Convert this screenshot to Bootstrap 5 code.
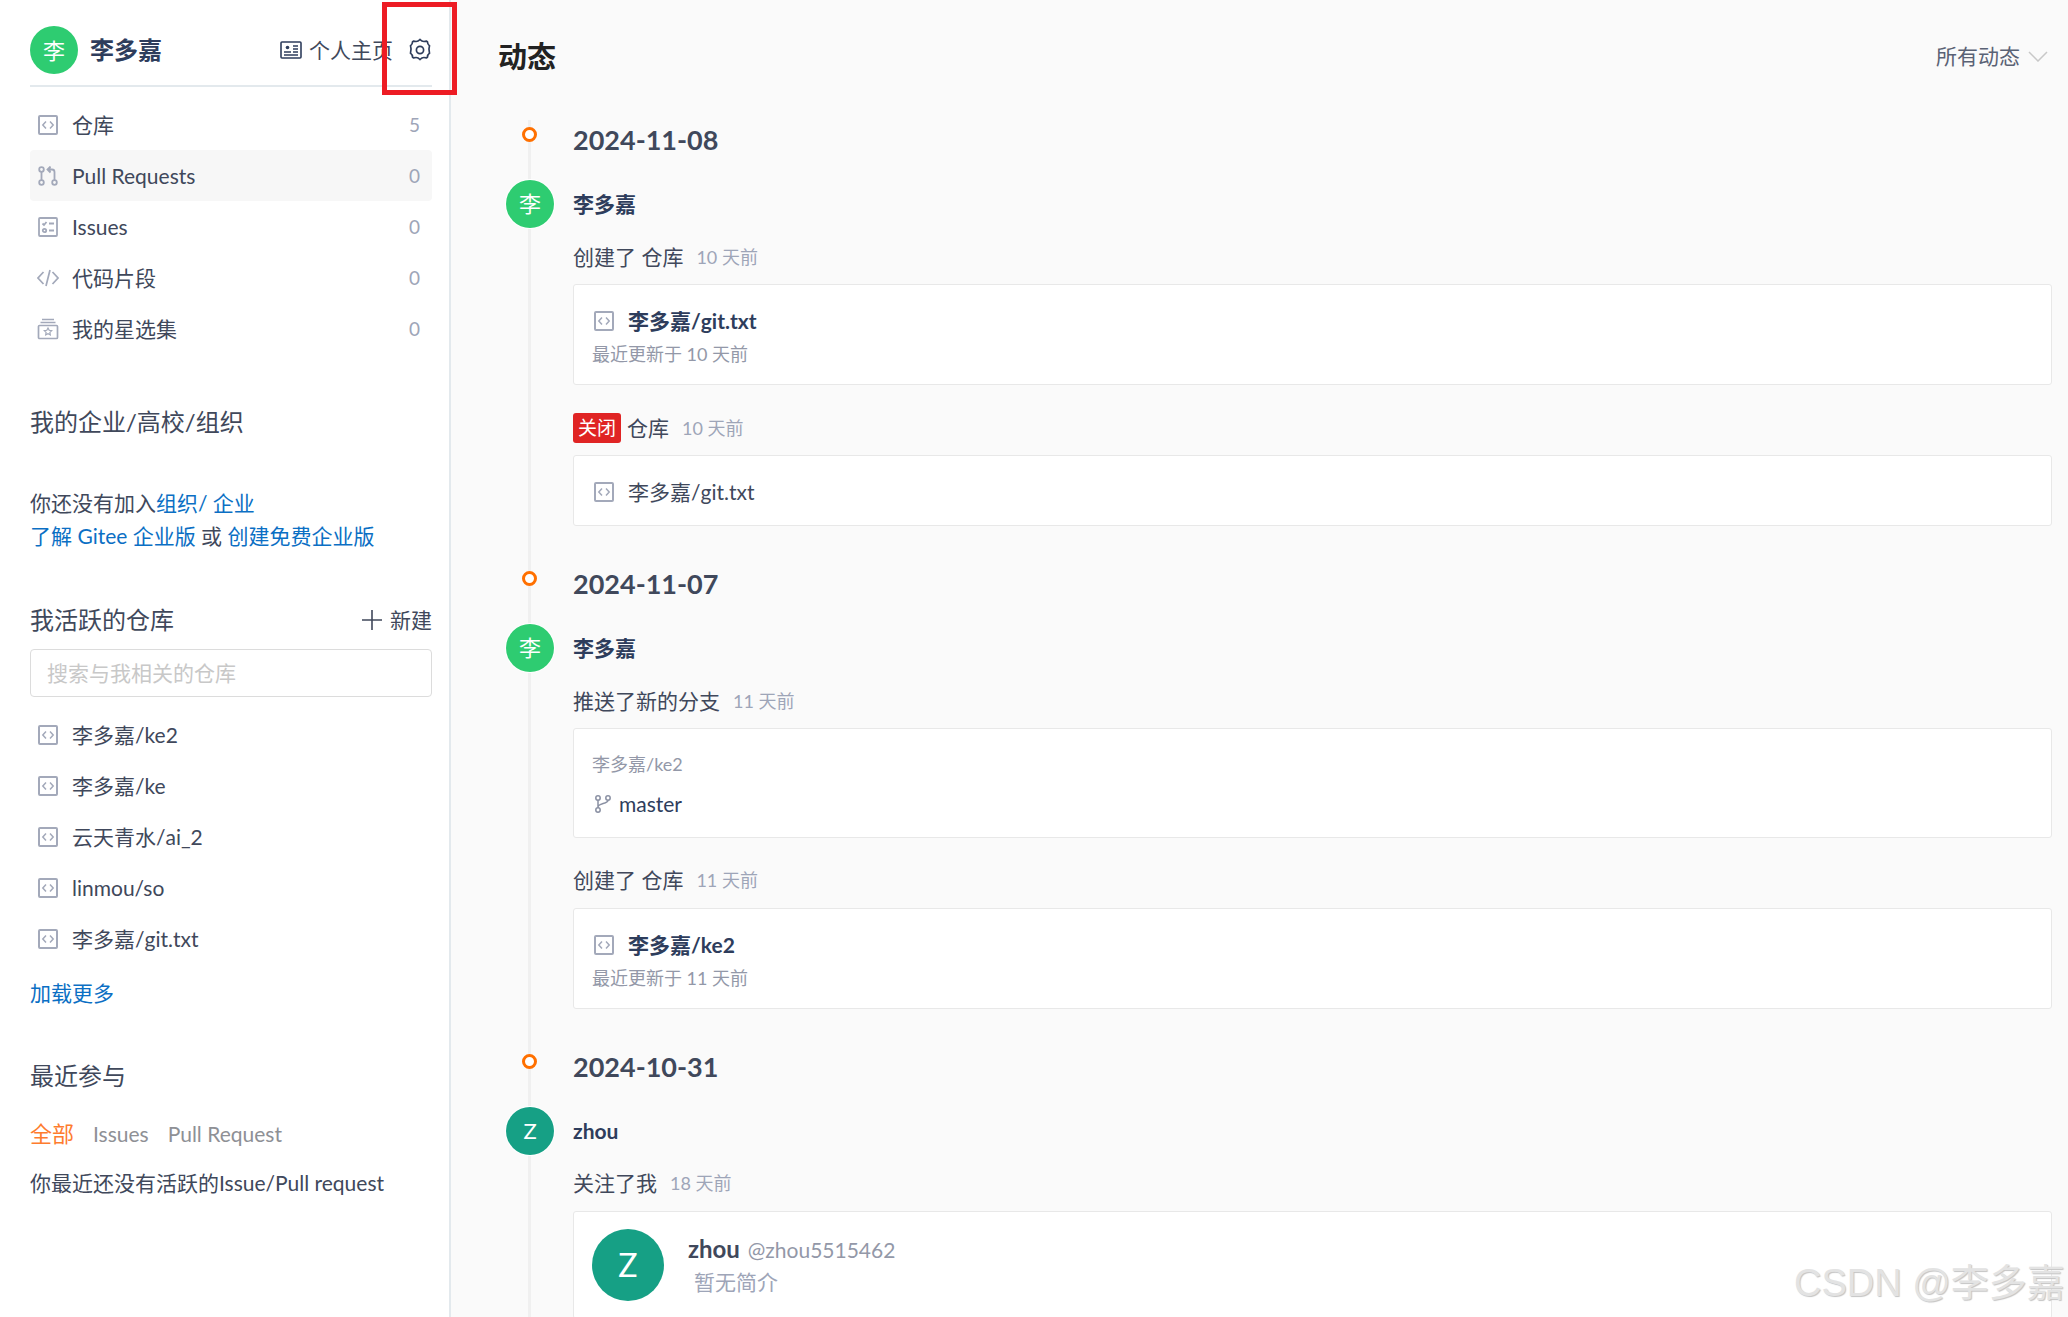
<!DOCTYPE html>
<html lang="zh-CN">
<head>
    <meta charset="UTF-8">
    <meta name="viewport" content="width=device-width, initial-scale=1.0">
    <title>动态</title>
    <link rel="stylesheet" href="https://cdn.jsdelivr.net/npm/bootstrap@5.3.2/dist/css/bootstrap.min.css">
    <style>
        html, body {
            height: 1317px;
            overflow: hidden;
        }
        body {
            font-family: Lato, "Noto Sans CJK SC", sans-serif;
            font-size: 21px;
            color: #40485b;
            background-color: #fafafa;
        }
        a { text-decoration: none; }
        svg { flex: none; display: block; }
        .page-wrap { height: 1317px; }
        .side-bar {
            width: 451px;
            flex: none;
            background-color: #fff;
            border-right: 2px solid #e3e9ed;
            padding: 26px 17px 0 30px;
        }
        .user-head {
            height: 61px;
            align-items: flex-start;
            border-bottom: 2px solid #e3e9ed;
        }
        .round-avatar {
            width: 48px;
            height: 48px;
            border-radius: 50%;
            color: #fff;
            font-size: 22px;
            flex: none;
        }
        .bg-li { background-color: #2ecc71; }
        .bg-zhou { background-color: #16a085; }
        .user-name {
            font-size: 24px;
            font-weight: 700;
            color: #2e3d5c;
            margin-left: 12px;
            line-height: 48px;
        }
        .home-link {
            font-size: 21px;
            color: #40485b;
            line-height: 24px;
            margin-left: auto;
            margin-top: 12px;
            gap: 7px;
            margin-right: 16px;
        }
        .gear-icon { margin-top: 12px; margin-right: 1px; }
        .side-list { margin-top: 12px; }
        .side-row {
            height: 51px;
            padding: 0 12px 0 8px;
            border-radius: 4px;
            gap: 14px;
            color: #40485b;
            line-height: 51px;
        }
        .side-row.is-on { background-color: #f7f7f7; }
        .wide-icon { margin: 0 -1px; }
        .side-count { margin-left: auto; color: #9ea5b8; font-size: 19px; }
        .side-title {
            font-size: 24px;
            line-height: 32px;
            color: #40485b;
        }
        .org-title { margin-top: 52px; }
        .org-text { margin-top: 48px; line-height: 33px; }
        .blue-link { color: #0b6fc4; }
        .active-head { margin-top: 52px; }
        .new-link { font-size: 21px; color: #40485b; gap: 8px; line-height: 32px; }
        .repo-search {
            margin-top: 13px;
            height: 48px;
            font-size: 21px;
            padding: 0 16px 2px;
            border: 1.5px solid #dcdcdc;
            border-radius: 4px;
        }
        .repo-search::placeholder { color: #c8c8c8; }
        .repo-list { margin-top: 12px; }
        .more-link { margin-top: 14px; line-height: 30px; display: block; }
        .recent-title { margin-top: 52px; }
        .recent-tabs { margin-top: 27px; line-height: 30px; gap: 19px; color: #8e9095; font-size: 21px; }
        .recent-tabs .tab-on { color: #fe7c2e; font-size: 22px; }
        .recent-empty { margin-top: 19px; line-height: 30px; }

        .main-area {
            flex: 1;
            min-width: 0;
            padding: 0 16px 0 47px;
            position: relative;
        }
        .main-top { height: 114px; padding-top: 37px; }
        .main-title { font-size: 29px; font-weight: 700; color: #222; line-height: 40px; margin: 0; }
        .filter-drop { margin-left: auto; margin-right: 4px; gap: 8px; color: #5a6275; line-height: 40px; height: 38px; }
        .feed-wrap { padding-left: 75px; position: relative; }
        .feed-line {
            position: absolute;
            left: 30px;
            top: 0;
            bottom: -400px;
            width: 3px;
            background-color: #f0f0f0;
        }
        .feed-date {
            position: relative;
            font-size: 27px;
            font-weight: 700;
            line-height: 40px;
            margin-top: 38px;
            color: #40485b;
        }
        .feed-date.is-first { margin-top: 6px; }
        .feed-date::before {
            content: "";
            position: absolute;
            left: -51px;
            top: 7px;
            width: 15px;
            height: 15px;
            border: 3px solid #ff7000;
            border-radius: 50%;
            background-color: #fff;
        }
        .feed-user {
            position: relative;
            height: 48px;
            margin-top: 20px;
            line-height: 48px;
            font-weight: 700;
            color: #2e3d5c;
        }
        .feed-user .round-avatar {
            position: absolute;
            left: -67px;
            top: 0;
            box-shadow: 0 0 0 1px #fff;
            font-weight: 400;
        }
        .feed-act { line-height: 30px; margin-top: 14px; gap: 9px; }
        .feed-act.is-next { margin-top: 28px; }
        .feed-act.after-branch { margin-top: 27px; }
        .feed-act.after-date3 { margin-top: 13px; }
        .feed-time { color: #9ea5b8; font-size: 18px; }
        .close-tag {
            background-color: #e02424;
            color: #fff;
            font-size: 19px;
            font-weight: 400;
            line-height: 30px;
            padding: 0 5px;
            border-radius: 3px;
            margin-right: -3px;
        }
        .feed-card {
            margin-top: 12px;
            border: 1.5px solid #e8e8e8;
            border-radius: 3px;
            background-color: #fff;
            padding: 21px 18px 17px;
            color: #40485b;
        }
        .card-low { margin-top: 13px; }
        .card-short { padding-bottom: 18px; }
        .card-push { padding-bottom: 18px; }
        .card-follow { padding-top: 17px; }
        .repo-line { line-height: 30px; gap: 14px; padding-left: 2px; }
        .repo-strong { font-weight: 700; color: #2e3d5c; }
        .card-sub { color: #9398a8; font-size: 18px; line-height: 26px; margin-top: 5px; }
        .card-sub.no-gap { margin-top: 1px; }
        .card-branch { line-height: 30px; gap: 8px; margin-top: 12px; color: #2e3d5c; padding-left: 3px; }
        .follow-avatar { width: 72px; height: 72px; font-size: 32px; border-radius: 50%; color: #fff; flex: none; }
        .follow-text { margin-top: 3px; }
        .follow-name { font-size: 24px; font-weight: 700; color: #40485b; line-height: 34px; }
        .follow-handle { font-size: 21px; color: #9398a8; font-weight: 400; margin-left: 2px; }
        .follow-desc { color: #9ea5b8; line-height: 30px; margin-left: 6px; }

        .mark-box {
            position: absolute;
            left: 382px;
            top: 2px;
            width: 75px;
            height: 93px;
            border: 5px solid #ed1c24;
            pointer-events: none;
        }
        .csdn-mark {
            position: absolute;
            left: 1794px;
            top: 1259px;
            font-family: "Liberation Sans", "Noto Sans CJK SC", sans-serif;
            font-size: 38px;
            line-height: 48px;
            color: #e3e3e3;
            text-shadow: 1px 1px 1px #c4c4c4;
            white-space: nowrap;
        }
    </style>
</head>
<body>
    <svg width="0" height="0" class="position-absolute">
        <symbol id="i-repo" viewBox="0 0 20 20">
            <rect x="1" y="1" width="18" height="18" rx="1" fill="none" stroke="#a3a9ba" stroke-width="2"/>
            <path d="M8 6.5 4.800 10 8 13.500M12 6.500l3.200 3.500-3.200 3.500" fill="none" stroke="#a3a9ba" stroke-width="1.500"/>
        </symbol>
    </svg>

    <div class="page-wrap d-flex">
        <aside class="side-bar">
            <div class="user-head d-flex">
                <div class="round-avatar bg-li d-flex align-items-center justify-content-center">李</div>
                <span class="user-name">李多嘉</span>
                <a class="home-link d-flex align-items-center" href="#">
                    <svg width="22" height="20" viewBox="0 0 22 20" fill="none" stroke="#2e3d5c" stroke-width="1.600"><rect x="1" y="2" width="20" height="16" rx="1"/><circle cx="7.500" cy="7.500" r="1.800" fill="#2e3d5c" stroke="none"/><path d="M4 12h7M4 15h14M13 6h5M13 9h5M13 12h5" stroke-width="1.400"/></svg>
                    个人主页
                </a>
                <svg class="gear-icon" width="22" height="24" viewBox="0 0 22 24" fill="none" stroke="#2e3d5c" stroke-width="1.700"><path d="M11 1.500c1.200 1.300 2.300 2 3.900 2 1 0 1.900-.2 2.600-.4l.9.7c.1 1.700.8 3 2.100 4-.5 1.500-.5 5.900 0 7.400-1.300 1-2 2.300-2.100 4l-.9.700c-.7-.2-1.600-.4-2.600-.4-1.600 0-2.700.7-3.900 2-1.200-1.300-2.300-2-3.900-2-1 0-1.900.2-2.600.4l-.9-.7c-.1-1.700-.8-3-2.100-4 .5-1.500.5-5.900 0-7.400 1.300-1 2-2.300 2.100-4l.9-.7c.7.2 1.600.4 2.600.4 1.600 0 2.700-.7 3.900-2z"/><circle cx="11" cy="12" r="3.600"/></svg>
            </div>

            <div class="side-list">
                <a class="side-row d-flex align-items-center" href="#"><svg width="20" height="20"><use href="#i-repo"/></svg>仓库<span class="side-count">5</span></a>
                <a class="side-row is-on d-flex align-items-center" href="#">
                    <svg width="20" height="20" viewBox="0 0 20 20" fill="none" stroke="#a3a9ba" stroke-width="1.800"><circle cx="3.500" cy="3.500" r="2.300"/><circle cx="3.500" cy="16.500" r="2.300"/><circle cx="16.500" cy="16.500" r="2.300"/><path d="M3.500 6v8M16.500 14V6c0-1.500-1-2.500-2.500-2.500h-2"/><path d="M12.500 .5 9.500 3.500l3 3" fill="#a3a9ba"/></svg>
                    Pull Requests<span class="side-count">0</span></a>
                <a class="side-row d-flex align-items-center" href="#">
                    <svg width="20" height="20" viewBox="0 0 20 20" fill="none" stroke="#a3a9ba" stroke-width="1.800"><rect x="1" y="1" width="18" height="18" rx="1"/><path d="m4.500 6.500 1.500 1.500 2.500-3M11 6.500h5M11 13.500h5"/><circle cx="6.500" cy="13.500" r="1.700"/></svg>
                    Issues<span class="side-count">0</span></a>
                <a class="side-row d-flex align-items-center" href="#">
                    <svg class="wide-icon" width="22" height="20" viewBox="0 0 22 20" fill="none" stroke="#a3a9ba" stroke-width="1.700"><path d="M6.500 4 1 10l5.500 6M15.500 4 21 10l-5.500 6M13 2 9 18"/></svg>
                    代码片段<span class="side-count">0</span></a>
                <a class="side-row d-flex align-items-center" href="#">
                    <svg class="wide-icon" width="22" height="22" viewBox="0 0 22 22" fill="none" stroke="#a3a9ba" stroke-width="1.700"><path d="M5 1.500h12M3.500 4.500h15"/><rect x="1.500" y="7.500" width="19" height="13" rx="1"/><path d="m11 10 1.200 2.300 2.500.4-1.800 1.700.4 2.500-2.300-1.200-2.300 1.200.4-2.500-1.800-1.700 2.500-.4z" stroke-width="1.200"/></svg>
                    我的星选集<span class="side-count">0</span></a>
            </div>

            <div class="side-title org-title">我的企业/高校/组织</div>
            <div class="org-text">
                你还没有加入<a class="blue-link" href="#">组织</a><a class="blue-link" href="#">/ 企业</a><br>
                <a class="blue-link" href="#">了解 Gitee 企业版</a> 或 <a class="blue-link" href="#">创建免费企业版</a>
            </div>

            <div class="active-head d-flex justify-content-between">
                <div class="side-title">我活跃的仓库</div>
                <a class="new-link d-flex align-items-center" href="#">
                    <svg width="20" height="20" viewBox="0 0 20 20" stroke="#40485b" stroke-width="1.600"><path d="M10 0v20M0 10h20"/></svg>
                    新建
                </a>
            </div>
            <input class="form-control repo-search" type="text" placeholder="搜索与我相关的仓库">

            <div class="repo-list">
                <a class="side-row d-flex align-items-center" href="#"><svg width="20" height="20"><use href="#i-repo"/></svg>李多嘉/ke2</a>
                <a class="side-row d-flex align-items-center" href="#"><svg width="20" height="20"><use href="#i-repo"/></svg>李多嘉/ke</a>
                <a class="side-row d-flex align-items-center" href="#"><svg width="20" height="20"><use href="#i-repo"/></svg>云天青水/ai_2</a>
                <a class="side-row d-flex align-items-center" href="#"><svg width="20" height="20"><use href="#i-repo"/></svg>linmou/so</a>
                <a class="side-row d-flex align-items-center" href="#"><svg width="20" height="20"><use href="#i-repo"/></svg>李多嘉/git.txt</a>
            </div>
            <a class="more-link blue-link" href="#">加载更多</a>

            <div class="side-title recent-title">最近参与</div>
            <div class="recent-tabs d-flex align-items-center">
                <span class="tab-on">全部</span>
                <span>Issues</span>
                <span>Pull Request</span>
            </div>
            <div class="recent-empty">你最近还没有活跃的Issue/Pull request</div>
        </aside>

        <main class="main-area">
            <div class="main-top d-flex align-items-start">
                <h1 class="main-title">动态</h1>
                <div class="filter-drop d-flex align-items-center">
                    所有动态
                    <svg width="20" height="11" viewBox="0 0 20 11" fill="none" stroke="#c8c8c8" stroke-width="1.500"><path d="m1 1 9 9 9-9"/></svg>
                </div>
            </div>

            <div class="feed-wrap">
                <div class="feed-line"></div>

                <div class="feed-date is-first">2024-11-08</div>
                <div class="feed-user"><div class="round-avatar bg-li d-flex align-items-center justify-content-center">李</div>李多嘉</div>
                <div class="feed-act d-flex align-items-center">创建了 仓库<span class="feed-time ms-1">10 天前</span></div>
                <div class="card feed-card">
                    <div class="repo-line d-flex align-items-center"><svg width="20" height="20"><use href="#i-repo"/></svg><span class="repo-strong">李多嘉/git.txt</span></div>
                    <div class="card-sub">最近更新于 10 天前</div>
                </div>
                <div class="feed-act is-next d-flex align-items-center"><span class="close-tag">关闭</span>仓库<span class="feed-time ms-1">10 天前</span></div>
                <div class="card feed-card card-short">
                    <div class="repo-line d-flex align-items-center"><svg width="20" height="20"><use href="#i-repo"/></svg>李多嘉/git.txt</div>
                </div>

                <div class="feed-date">2024-11-07</div>
                <div class="feed-user"><div class="round-avatar bg-li d-flex align-items-center justify-content-center">李</div>李多嘉</div>
                <div class="feed-act d-flex align-items-center">推送了新的分支<span class="feed-time ms-1">11 天前</span></div>
                <div class="card feed-card card-push">
                    <div class="card-sub no-gap">李多嘉/ke2</div>
                    <div class="card-branch d-flex align-items-center">
                        <svg width="16" height="18" viewBox="0 0 16 18" fill="none" stroke="#8a90a3" stroke-width="1.500"><circle cx="3" cy="3" r="2.200"/><circle cx="13" cy="3" r="2.200"/><circle cx="3" cy="15" r="2.200"/><path d="M3 5.200v7.600M13 5.200C13 9 3 8 3 12"/></svg>
                        master
                    </div>
                </div>
                <div class="feed-act after-branch d-flex align-items-center">创建了 仓库<span class="feed-time ms-1">11 天前</span></div>
                <div class="card feed-card card-low">
                    <div class="repo-line d-flex align-items-center"><svg width="20" height="20"><use href="#i-repo"/></svg><span class="repo-strong">李多嘉/ke2</span></div>
                    <div class="card-sub">最近更新于 11 天前</div>
                </div>

                <div class="feed-date">2024-10-31</div>
                <div class="feed-user"><div class="round-avatar bg-zhou d-flex align-items-center justify-content-center">Z</div>zhou</div>
                <div class="feed-act after-date3 d-flex align-items-center">关注了我<span class="feed-time ms-1">18 天前</span></div>
                <div class="card feed-card card-low card-follow flex-row gap-4">
                    <div class="follow-avatar bg-zhou d-flex align-items-center justify-content-center">Z</div>
                    <div class="follow-text">
                        <div class="follow-name">zhou <span class="follow-handle">@zhou5515462</span></div>
                        <div class="follow-desc">暂无简介</div>
                    </div>
                </div>
            </div>
        </main>
    </div>

    <div class="mark-box"></div>
    <div class="csdn-mark">CSDN @李多嘉</div>

    <script src="https://cdn.jsdelivr.net/npm/bootstrap@5.3.2/dist/js/bootstrap.bundle.min.js"></script>
</body>
</html>
